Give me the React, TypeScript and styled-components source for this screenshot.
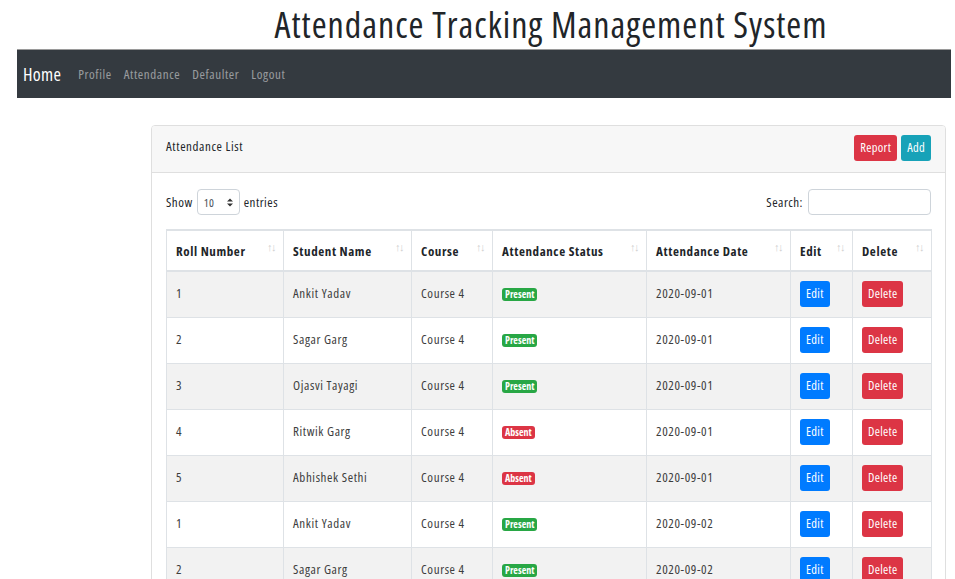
import React from "react";
import styled, { createGlobalStyle } from "styled-components";

const GlobalStyle = createGlobalStyle`
  html, body { margin: 0; padding: 0; background: #fff; }
  body {
    font-family: "Open Sans", "Noto Sans", "Liberation Sans", sans-serif;
    font-stretch: 75%;
    color: #212529;
  }
  * { box-sizing: border-box; }
`;

const Title = styled.h1`
  margin: 0;
  padding-left: 147px;
  height: 49px;
  line-height: 50px;
  text-align: center;
  font-size: 36px;
  letter-spacing: 1px;
  font-weight: 400;
  color: #212529;
`;

const NavBar = styled.nav`
  margin: 0 4px 0 17px;
  height: 49px;
  background: #343a40;
  border-top: 1px solid #9a9a9a;
  display: flex;
  align-items: center;
  padding-left: 6px;
`;

const Brand = styled.a`
  color: #fff;
  font-size: 18px;
  letter-spacing: 0.3px;
  margin-right: 11px;
`;

const NavLink = styled.a`
  color: rgba(255, 255, 255, 0.5);
  font-size: 13px;
  letter-spacing: 0.6px;
  padding: 0 6px;
`;

const Card = styled.section`
  margin: 27px 9px 0 151px;
  border: 1px solid #dfdfdf;
  border-radius: 4px;
  overflow: hidden;
`;

const CardHeader = styled.header`
  background: #f7f7f7;
  border-bottom: 1px solid #dfdfdf;
  height: 47px;
  padding: 0 14px 0 14px;
  display: flex;
  align-items: center;
  justify-content: space-between;
  font-size: 13px;
  letter-spacing: 0.6px;
`;

const HeaderTitle = styled.span`
  padding-bottom: 6px;
`;

const HeaderButtons = styled.div`
  display: flex;
  gap: 4px;
  padding-bottom: 2px;
`;

const Btn = styled.button<{ $bg: string }>`
  font-family: inherit;
  font-stretch: 75%;
  background: ${(p) => p.$bg};
  color: #fff;
  border: none;
  border-radius: 3px;
  height: 26px;
  padding: 0 6px;
  font-size: 12.5px;
  letter-spacing: 0.3px;
  line-height: 26px;
`;

const CardBody = styled.div`
  padding: 16px 14px 0 14px;
`;

const Controls = styled.div`
  display: flex;
  justify-content: space-between;
  align-items: center;
  font-size: 13px;
  letter-spacing: 0.5px;
  margin-bottom: 14px;
`;

const ShowGroup = styled.label`
  display: flex;
  align-items: center;
  gap: 4px;
`;

const SelectBox = styled.span`
  display: inline-flex;
  align-items: center;
  justify-content: space-between;
  width: 43px;
  height: 26px;
  border: 1px solid #ced4da;
  border-radius: 4px;
  padding: 0 6px 0 6px;
  font-size: 11.5px;
  color: #495057;
`;

const Arrows = styled.svg`
  width: 6px;
  height: 9px;
`;

const SearchGroup = styled.label`
  display: flex;
  align-items: center;
  gap: 5px;
`;

const SearchInput = styled.input`
  width: 123px;
  height: 26px;
  border: 1px solid #ced4da;
  border-radius: 4px;
`;

const Table = styled.table`
  width: 765px;
  border-collapse: collapse;
  font-size: 13px;
  letter-spacing: 0.6px;
  table-layout: fixed;
`;

const Th = styled.th<{ $w: number }>`
  width: ${(p) => p.$w}px;
  height: 41px;
  text-align: left;
  padding: 0 9px;
  font-weight: 700;
  border: 1px solid #dee2e6;
  border-top: 2px solid #dee2e6;
  border-bottom: 2px solid #dee2e6;
  position: relative;
  vertical-align: middle;
`;

const SortIcon = styled.span`
  position: absolute;
  right: 8px;
  top: 8px;
  font-size: 11px;
  letter-spacing: -1.5px;
  color: #cfcfcf;
  font-weight: 400;
`;

const Tr = styled.tr<{ $striped: boolean }>`
  background: ${(p) => (p.$striped ? "#f2f2f2" : "#fff")};
`;

const Td = styled.td`
  height: 46px;
  padding: 0 9px;
  border: 1px solid #dee2e6;
  color: #3d3d3d;
  vertical-align: middle;
  padding-bottom: 3px;
`;

const Badge = styled.span<{ $bg: string }>`
  display: inline-block;
  background: ${(p) => p.$bg};
  color: #fff;
  font-size: 10px;
  font-weight: 700;
  letter-spacing: 0;
  padding: 0 3px;
  line-height: 13px;
  border-radius: 3px;
`;

const RowBtn = styled(Btn)`
  margin-top: 3px;
`;

const rows: [string, string, boolean, string][] = [
  ["1", "Ankit Yadav", true, "2020-09-01"],
  ["2", "Sagar Garg", true, "2020-09-01"],
  ["3", "Ojasvi Tayagi", true, "2020-09-01"],
  ["4", "Ritwik Garg", false, "2020-09-01"],
  ["5", "Abhishek Sethi", false, "2020-09-01"],
  ["1", "Ankit Yadav", true, "2020-09-02"],
  ["2", "Sagar Garg", true, "2020-09-02"],
  ["3", "Ojasvi Tayagi", true, "2020-09-02"],
];

const cols: [string, number][] = [
  ["Roll Number", 117],
  ["Student Name", 128],
  ["Course", 81],
  ["Attendance Status", 154],
  ["Attendance Date", 144],
  ["Edit", 62],
  ["Delete", 79],
];

export default function App() {
  return (
    <>
      <GlobalStyle />
      <Title>Attendance Tracking Management System</Title>
      <NavBar>
        <Brand>Home</Brand>
        <NavLink>Profile</NavLink>
        <NavLink>Attendance</NavLink>
        <NavLink>Defaulter</NavLink>
        <NavLink>Logout</NavLink>
      </NavBar>
      <Card>
        <CardHeader>
          <HeaderTitle>Attendance List</HeaderTitle>
          <HeaderButtons>
            <Btn $bg="#dc3545">Report</Btn>
            <Btn $bg="#17a2b8">Add</Btn>
          </HeaderButtons>
        </CardHeader>
        <CardBody>
          <Controls>
            <ShowGroup>
              Show
              <SelectBox>
                10
                <Arrows viewBox="0 0 6 9">
                  <path d="M0 3.5 L3 0.5 L6 3.5 Z M0 5.5 L3 8.5 L6 5.5 Z" fill="#333" />
                </Arrows>
              </SelectBox>
              entries
            </ShowGroup>
            <SearchGroup>
              Search:
              <SearchInput />
            </SearchGroup>
          </Controls>
          <Table>
            <thead>
              <tr>
                {cols.map(([c, w]) => (
                  <Th key={c} $w={w}>
                    {c}
                    <SortIcon>↑↓</SortIcon>
                  </Th>
                ))}
              </tr>
            </thead>
            <tbody>
              {rows.map(([roll, name, present, date], i) => (
                <Tr key={i} $striped={i % 2 === 0}>
                  <Td>{roll}</Td>
                  <Td>{name}</Td>
                  <Td>Course 4</Td>
                  <Td>
                    <Badge $bg={present ? "#28a745" : "#dc3545"}>
                      {present ? "Present" : "Absent"}
                    </Badge>
                  </Td>
                  <Td>{date}</Td>
                  <Td>
                    <RowBtn $bg="#007bff">Edit</RowBtn>
                  </Td>
                  <Td>
                    <RowBtn $bg="#dc3545">Delete</RowBtn>
                  </Td>
                </Tr>
              ))}
            </tbody>
          </Table>
        </CardBody>
      </Card>
    </>
  );
}
